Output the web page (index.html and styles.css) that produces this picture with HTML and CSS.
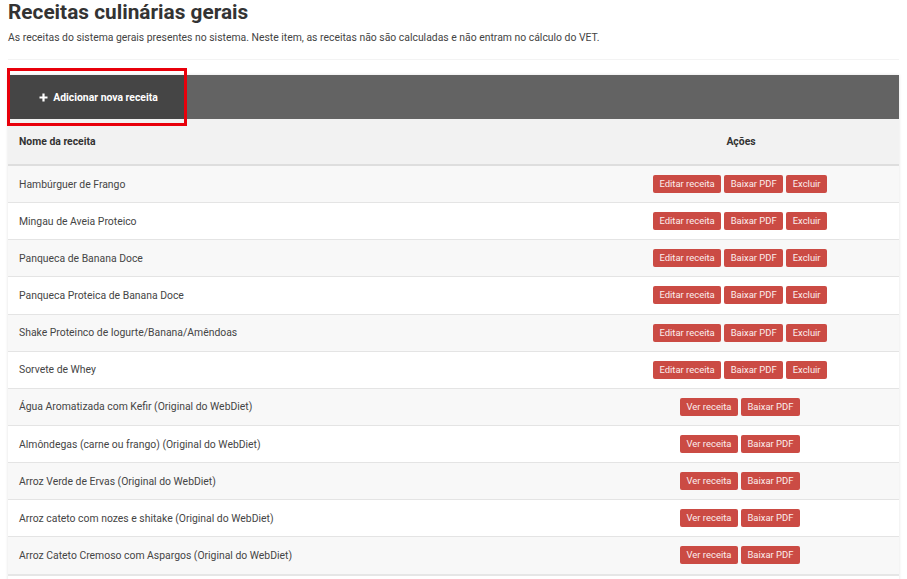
FILE: index.html
```html
<!DOCTYPE html>
<html lang="pt-BR">
<head>
<meta charset="utf-8">
<title>Receitas culinárias gerais</title>
<link rel="stylesheet" href="styles.css">
</head>
<body>
<h1 class="title">Receitas culinárias gerais</h1>
<p class="subtitle">As receitas do sistema gerais presentes no sistema. Neste item, as receitas não são calculadas e não entram no cálculo do VET.</p>
<div class="divider"></div>
<div class="panel">
  <div class="toolbar">
    <button class="add-btn" type="button">
      <svg class="plus" width="9" height="9" viewBox="0 0 9 9"><path d="M4.5 0.5v8M0.5 4.5h8" stroke="#fff" stroke-width="2.2"/></svg>
      <span>Adicionar nova receita</span>
      <span class="highlight"></span>
    </button>
  </div>
  <div class="row head">
    <div class="name">Nome da receita</div>
    <div class="actions">Ações</div>
  </div>
  <div class="row"><div class="name">Hambúrguer de Frango</div><div class="actions"><span class="btn">Editar receita</span><span class="btn">Baixar PDF</span><span class="btn">Excluir</span></div></div>
  <div class="row"><div class="name">Mingau de Aveia Proteico</div><div class="actions"><span class="btn">Editar receita</span><span class="btn">Baixar PDF</span><span class="btn">Excluir</span></div></div>
  <div class="row"><div class="name">Panqueca de Banana Doce</div><div class="actions"><span class="btn">Editar receita</span><span class="btn">Baixar PDF</span><span class="btn">Excluir</span></div></div>
  <div class="row"><div class="name">Panqueca Proteica de Banana Doce</div><div class="actions"><span class="btn">Editar receita</span><span class="btn">Baixar PDF</span><span class="btn">Excluir</span></div></div>
  <div class="row"><div class="name">Shake Proteinco de Iogurte/Banana/Amêndoas</div><div class="actions"><span class="btn">Editar receita</span><span class="btn">Baixar PDF</span><span class="btn">Excluir</span></div></div>
  <div class="row"><div class="name">Sorvete de Whey</div><div class="actions"><span class="btn">Editar receita</span><span class="btn">Baixar PDF</span><span class="btn">Excluir</span></div></div>
  <div class="row"><div class="name">Água Aromatizada com Kefir (Original do WebDiet)</div><div class="actions"><span class="btn">Ver receita</span><span class="btn">Baixar PDF</span></div></div>
  <div class="row"><div class="name">Almôndegas (carne ou frango) (Original do WebDiet)</div><div class="actions"><span class="btn">Ver receita</span><span class="btn">Baixar PDF</span></div></div>
  <div class="row"><div class="name">Arroz Verde de Ervas (Original do WebDiet)</div><div class="actions"><span class="btn">Ver receita</span><span class="btn">Baixar PDF</span></div></div>
  <div class="row"><div class="name">Arroz cateto com nozes e shitake (Original do WebDiet)</div><div class="actions"><span class="btn">Ver receita</span><span class="btn">Baixar PDF</span></div></div>
  <div class="row last"><div class="name">Arroz Cateto Cremoso com Aspargos (Original do WebDiet)</div><div class="actions"><span class="btn">Ver receita</span><span class="btn">Baixar PDF</span></div></div>
  <div class="row"><div class="name">&nbsp;</div><div class="actions"></div></div>
</div>
</body>
</html>
```

FILE: styles.css
```css
html, body {
  margin: 0;
  padding: 0;
  background: #fff;
}
body {
  padding: 0 8px;
  font-family: Roboto, "Liberation Sans", Arial, sans-serif;
  color: #444;
  overflow: hidden;
}
.title {
  margin: 0;
  font-size: 20.8px;
  line-height: 24px;
  font-weight: 700;
  color: #333;
}
.subtitle {
  margin: 6px 0 0;
  font-size: 10.4px;
  line-height: 15px;
  color: #444;
}
.divider {
  height: 1px;
  margin-top: 14px;
  background: #f3f3f3;
}
.panel {
  margin-top: 15px;
  box-shadow: 0 0 3px rgba(0, 0, 0, 0.12);
}
.toolbar {
  display: flex;
  height: 44px;
  background: #636363;
  padding-left: 2px;
}
.add-btn {
  position: relative;
  display: flex;
  align-items: center;
  justify-content: center;
  gap: 5px;
  width: 174px;
  height: 44px;
  padding: 0 0 0 3px;
  border: 0;
  background: #454545;
  color: #fff;
  font-family: Roboto, "Liberation Sans", Arial, sans-serif;
  font-size: 10.4px;
  font-weight: 700;
}
.plus {
  display: block;
}
.highlight {
  position: absolute;
  top: -7px;
  bottom: -7px;
  left: -3px;
  right: -3px;
  border: 3px solid #e8000b;
}
.row {
  display: grid;
  grid-template-columns: 1fr 318px;
  align-items: center;
  height: 36.15px;
  border-bottom: 1px solid #e4e4e4;
  font-size: 10.4px;
  color: #454545;
}
.row:nth-child(odd) {
  background: #f8f8f8;
}
.row:nth-child(even) {
  background: #fff;
}
.row.head {
  height: 45px;
  background: #f2f2f2;
  border-bottom: 2px solid #dedede;
  font-weight: 700;
  color: #333;
}
.row.last {
  border-bottom: 2px solid #e6e6e6;
}
.name {
  padding-left: 11px;
}
.actions {
  display: flex;
  justify-content: center;
  gap: 3px;
}
.head .actions {
  padding-left: 2px;
}
.btn {
  display: inline-block;
  height: 18px;
  line-height: 18px;
  padding: 0 6.5px;
  background: #cb4b44;
  border-radius: 2px;
  color: #fbeeee;
  font-size: 9.45px;
}
```
